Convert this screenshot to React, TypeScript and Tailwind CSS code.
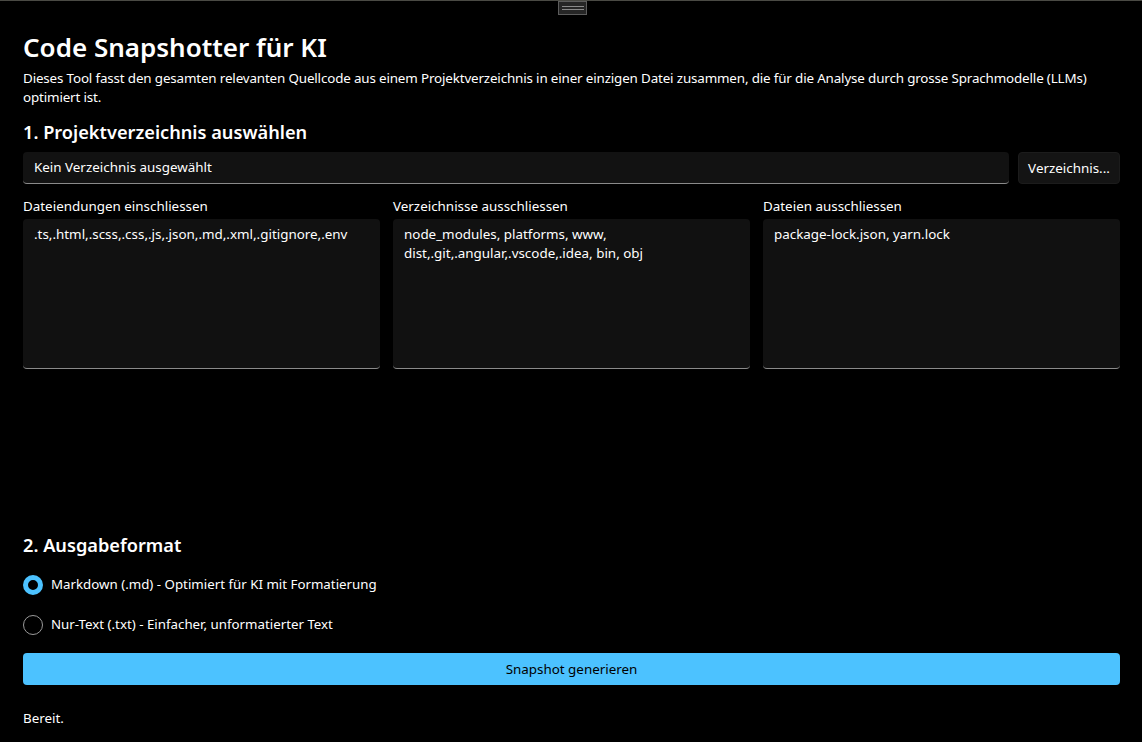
import { useState } from 'react'

const FIELDS = [
  { label: 'Dateiendungen einschliessen', value: '.ts,.html,.scss,.css,.js,.json,.md,.xml,.gitignore,.env' },
  { label: 'Verzeichnisse ausschliessen', value: 'node_modules, platforms, www,\ndist,.git,.angular,.vscode,.idea, bin, obj' },
  { label: 'Dateien ausschliessen', value: 'package-lock.json, yarn.lock' },
]

const FORMATS = [
  { id: 'md', label: 'Markdown (.md) - Optimiert für KI mit Formatierung' },
  { id: 'txt', label: 'Nur-Text (.txt) - Einfacher, unformatierter Text' },
]

export default function App() {
  const [format, setFormat] = useState('md')

  return (
    <div className="relative h-[742px] overflow-hidden bg-black text-white border-t border-[#4a4a44] font-['Noto_Sans','Open_Sans',sans-serif]">
      {/* drag handle */}
      <div className="absolute top-0 left-[558px] w-[29px] h-[14px] border border-[#5c5c5c] bg-[#262626] flex flex-col items-center justify-center gap-[2px]">
        <div className="w-[22px] h-px bg-[#8a8a8a]" />
        <div className="w-[22px] h-px bg-[#8a8a8a]" />
      </div>

      <div className="px-[23px] pr-[22px] pt-[28px] flex flex-col">
        <h1 className="text-[26px] leading-[36px] font-semibold">Code Snapshotter für KI</h1>
        <p className="mt-[4px] text-[13.4px] leading-[19px] tracking-[-0.15px]">
          Dieses Tool fasst den gesamten relevanten Quellcode aus einem Projektverzeichnis in einer einzigen Datei zusammen, die für die Analyse durch grosse Sprachmodelle (LLMs) optimiert ist.
        </p>

        <h2 className="mt-[11px] text-[18.2px] leading-[28px] font-semibold">1. Projektverzeichnis auswählen</h2>
        <div className="mt-[6px] flex gap-[9px]">
          <div className="flex-1 h-[32px] rounded-[4px] bg-[#121212] border-b border-[#8a8a8a] flex items-center px-[11px] text-[13.4px]">
            Kein Verzeichnis ausgewählt
          </div>
          <button className="w-[102px] h-[32px] rounded-[4px] bg-[#141414] border border-[#1c1c1c] text-[13.4px] text-white">
            Verzeichnis...
          </button>
        </div>

        <div className="mt-[12px] grid grid-cols-3 gap-[13px]">
          {FIELDS.map(f => (
            <div key={f.label} className="flex flex-col">
              <div className="text-[13.4px] leading-[20px]">{f.label}</div>
              <div className="mt-[3px] h-[150px] rounded-[4px] bg-[#111111] border-b border-[#8a8a8a] px-[11px] pt-[6px] text-[13.4px] leading-[19px] whitespace-pre-line">
                {f.value}
              </div>
            </div>
          ))}
        </div>

        <h2 className="mt-[162px] text-[18.2px] leading-[28px] font-semibold">2. Ausgabeformat</h2>
        <div className="mt-[6px] flex flex-col">
          {FORMATS.map(o => (
            <label key={o.id} className="h-[40px] flex items-center gap-[8px] cursor-pointer" onClick={() => setFormat(o.id)}>
              {format === o.id ? (
                <span className="w-[20px] h-[20px] rounded-full border-[5px] border-[#4cc2ff] bg-black" />
              ) : (
                <span className="w-[20px] h-[20px] rounded-full border border-[#9a9a9a]" />
              )}
              <span className="text-[13.3px]">{o.label}</span>
            </label>
          ))}
        </div>

        <button className="mt-[8px] h-[32px] rounded-[4px] bg-[#4cc2ff] text-black text-[13.4px]">
          Snapshot generieren
        </button>

        <div className="mt-[23px] text-[13.4px] leading-[20px]">Bereit.</div>
      </div>
    </div>
  )
}
